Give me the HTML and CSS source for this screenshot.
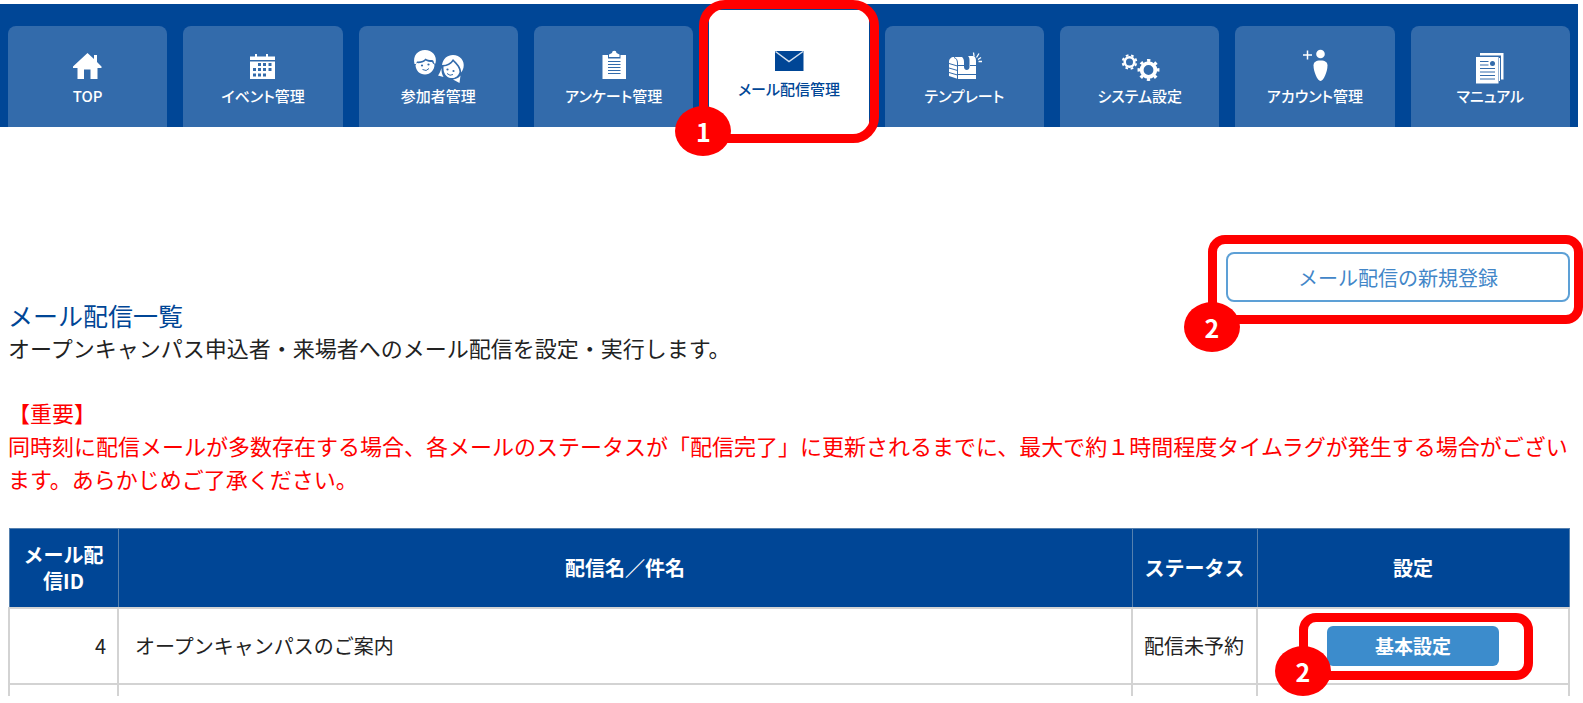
FILE: index.html
```
<!DOCTYPE html>
<html lang="ja">
<head>
<meta charset="utf-8">
<meta name="viewport" content="width=device-width, initial-scale=1">
<title>メール配信一覧</title>
<link rel="stylesheet" href="styles.css">
</head>
<body>
<div class="page">
  <nav class="nav" aria-label="メインメニュー">
    <ul class="nav-list">
      <li class="nav-item"><a class="tab" href="#">
        <svg class="icon" viewBox="0 0 60 36" aria-hidden="true"><path fill="currentColor" d="M29.500 5 36 11V7h3v7l4.500 4.500v1.500H39.500V31H32.500V21.500H26V31H19.500V20H15V18.500Z"/></svg>
        <span>TOP</span></a></li>
      <li class="nav-item"><a class="tab" href="#">
        <svg class="icon" viewBox="0 0 60 36" aria-hidden="true"><path fill="currentColor" fill-rule="evenodd" d="M17 8.500h5V6h2v2.500h9V6h2v2.500h7V12H17ZM17 13.500H42V31H17ZM25 15v3h3v-3ZM30 15v3h3v-3ZM35.500 15v3h3v-3ZM20 20v3h3v-3ZM25 20v3h3v-3ZM30 20v3h3v-3ZM35.500 20v3h3v-3ZM20 25.500v3h3v-3ZM25 25.500v3h3v-3ZM30 25.500v3h3v-3Z"/></svg>
        <span>イベント管理</span></a></li>
      <li class="nav-item"><a class="tab" href="#">
        <svg class="icon" viewBox="0 0 60 36" aria-hidden="true">
          <path fill="currentColor" d="M6.500 16C4.500 7.500 10 2 17 2s12.500 5.500 10.500 13.500l-1.500 0C26 13 25 12 24 12c-3 0-5-.5-6.500-1.500C16 12.500 12.500 14 9 13.500L8 16Z"/>
          <path fill="currentColor" d="M8.500 15c3.500.5 7-.5 9.200-2.600 1.800 1.100 4 1.600 6.300 1.600.8 1 1 2 2.500 2.500C26.500 22 22.500 26.500 17 26.500S8 22.500 7.500 17.500Z"/>
          <g class="ink"><circle cx="14" cy="17.500" r="1.100"/><circle cx="20.500" cy="16.500" r="1.100"/></g>
          <path d="M14.500 21.500q4 2.500 6.500-1" fill="none" class="line"/>
          <path fill="currentColor" d="M34 17C35 10.500 39.500 7 45 7c7 0 12 6 10.500 12.500-.5 2-1.500 4-2.500 5 .5-5-3.500-9-8-13.500-2.500 4-6 6-11 6Z"/>
          <path fill="currentColor" d="M35.500 18.500c4-.3 7.500-2 9.700-5 3.800 3.500 6.300 7 6.300 10.500-1 4-4.500 6.500-8.500 6-5-.5-8-5-7.500-11.500ZM33.500 20c-.2 3.500.5 6.500 2 9L30 27.500c1.500-2 2.500-4.500 3.500-7.500ZM45 31.500c3-.3 5.500-1.500 7.500-4l-1 7.500Z"/>
          <g class="ink"><circle cx="39.500" cy="21.500" r="1.100"/><circle cx="45.500" cy="23" r="1.100"/></g>
          <path d="M39 25.500q3 3 6 1" fill="none" class="line"/>
        </svg>
        <span>参加者管理</span></a></li>
      <li class="nav-item"><a class="tab" href="#">
        <svg class="icon" viewBox="0 0 60 36" aria-hidden="true"><path fill="currentColor" d="M18.500 7H24L24 10.500H36.500L36.500 7H42V31H18.500Z"/><path fill="currentColor" d="M25 9V6.500l3-1.500a2 2 0 0 1 4.500 0l3 1.500V9Z"/><path class="line" fill="none" d="M24 13.500H36.500M24 16.500H36.500M24 19.500H36.500M24 22.500H36.500M24 25.500H36.500"/></svg>
        <span>アンケート管理</span></a></li>
      <li class="nav-item"><a class="tab tab-active" href="#" aria-current="page">
        <svg class="icon" viewBox="0 0 60 36" aria-hidden="true"><path fill="currentColor" d="M16 8H44.500V28H16Z"/><path d="M16.500 8.500 30 18.500 44 8.500" fill="none" stroke="#d5e2f0" stroke-width="1.500"/></svg>
        <span>メール配信管理</span></a>
        <div class="mark mark-tab"><span class="badge">1</span></div></li>
      <li class="nav-item"><a class="tab" href="#">
        <svg class="icon" viewBox="0 0 60 36" aria-hidden="true"><path fill="currentColor" d="M15 14c0-3 2-5 5-5h8c1.500 1 2 3 2 5v5c0 4 5.500 4 5.500 0V12c0-2-.5-3-1.500-4h5c2 0 3 2 3 5V31H24l-9-3Z"/><path class="line" fill="none" d="M23.500 31V15c0-3-1.500-5-3.500-5.500M15 15.500l8.500 2.500M15 20l8.500 2.500M15 24.500l8.500 2.500M23.500 17.500H30M36 17.500h6M24 26.500H42"/><path stroke="currentColor" stroke-width="1.300" fill="none" d="M40 8 39.500 4.500M42.500 9.500l2.500-4M44 11.500l3-2M44.500 13.500h3.500"/></svg>
        <span>テンプレート</span></a></li>
      <li class="nav-item"><a class="tab" href="#">
        <svg class="icon" viewBox="0 0 60 36" aria-hidden="true">
          <g fill="none" stroke="currentColor"><circle cx="19.500" cy="14" r="4.800" stroke-width="2.600"/><circle cx="19.500" cy="14" r="6.800" stroke-width="2" stroke-dasharray="2.700 2.640" transform="rotate(12 19.500 14)"/><circle cx="38.500" cy="22" r="6.800" stroke-width="3.800"/><circle cx="38.500" cy="22" r="9.600" stroke-width="2.800" stroke-dasharray="3.200 4.340" transform="rotate(-10 38.500 22)"/></g>
        </svg>
        <span>システム設定</span></a></li>
      <li class="nav-item"><a class="tab" href="#">
        <svg class="icon" viewBox="0 0 60 36" aria-hidden="true"><path d="M22.500 2.500V11.500M18 7H27" stroke="currentColor" stroke-width="1.500"/><circle cx="35.500" cy="6" r="4.300" fill="currentColor"/><path fill="currentColor" d="M35.500 12.500c5 0 7 2 7 5 0 6-4 15.500-7 15.500s-7-9.500-7-15.500c0-3 2-5 7-5Z"/></svg>
        <span>アカウント管理</span></a></li>
      <li class="nav-item"><a class="tab" href="#">
        <svg class="icon" viewBox="0 0 60 36" aria-hidden="true"><path fill="currentColor" d="M20 5H43.500V31.500H41V7.500H20ZM16 9H38.500V35.500H16Z"/><path class="line" fill="none" d="M20 13.500h8.500M20 17h8.500M20 20.500H35M20 24H35M20 27.500H35M20 31H35"/><path stroke="currentColor" fill="none" d="M39.500 10V33"/><circle cx="32.500" cy="15.500" r="2.500" class="ink"/></svg>
        <span>マニュアル</span></a></li>
    </ul>
  </nav>

  <main class="main">
    <div class="actions">
      <div class="marked marked-new">
        <button class="btn-outline" type="button">メール配信の新規登録</button>
        <div class="mark mark-new"><span class="badge">2</span></div>
      </div>
    </div>
    <h1 class="title">メール配信一覧</h1>
    <p class="text">オープンキャンパス申込者・来場者へのメール配信を設定・実行します。</p>
    <p class="text notice">【重要】<br>同時刻に配信メールが多数存在する場合、各メールのステータスが「配信完了」に更新されるまでに、最大で約１時間程度タイムラグが発生する場合がございます。あらかじめご了承ください。</p>

    <table class="list">
      <colgroup><col class="col-id"><col><col class="col-status"><col class="col-set"></colgroup>
      <thead>
        <tr><th scope="col">メール配信ID</th><th scope="col">配信名／件名</th><th scope="col">ステータス</th><th scope="col">設定</th></tr>
      </thead>
      <tbody>
        <tr>
          <td class="num">4</td>
          <td class="name">オープンキャンパスのご案内</td>
          <td>配信未予約</td>
          <td class="center"><div class="marked marked-set">
            <button class="btn-solid" type="button">基本設定</button>
            <div class="mark mark-set"><span class="badge">2</span></div>
          </div></td>
        </tr>
        <tr class="partial"><td></td><td></td><td></td><td></td></tr>
      </tbody>
    </table>
  </main>
</div>
</body>
</html>
```
FILE: styles.css
```
* { box-sizing: border-box; }
body {
  margin: 0;
  background: #fff;
  color: #222;
  font-family: "Noto Sans CJK JP", sans-serif;
}
.page { padding: 4px 5px 0 0; }

.nav { background: #004696; padding: 0 8px; }
.nav-list {
  display: grid;
  grid-template-columns: repeat(9, minmax(0, 1fr));
  column-gap: 16px;
  align-items: end;
  margin: 0;
  padding: 6px 0 0;
  list-style: none;
}
.nav-item { position: relative; }
.tab {
  display: flex;
  flex-direction: column;
  align-items: center;
  padding: 22px 0 21px;
  border-radius: 8px 8px 0 0;
  background: #336bab;
  color: #fff;
  font-size: 15px;
  font-weight: 500;
  line-height: 20px;
  font-feature-settings: "palt";
  text-decoration: none;
  white-space: nowrap;
}
.tab span { margin-top: 2px; }
.tab-active {
  padding: 33px 0 28px;
  background: #fff;
  color: #004696;
}
.tab-active span { margin-top: 0; }
.icon { display: block; width: 60px; height: 36px; overflow: visible; }
.line { stroke: #336bab; stroke-width: 1; }
.ink { fill: #336bab; }

.mark {
  position: absolute;
  border: 9px solid #f00;
  border-radius: 17px;
  pointer-events: none;
}
.mark-tab { inset: -10px -10px -16px; border-radius: 26px; }
.mark-new { inset: -17px -13px -22px -18px; }
.mark-set { inset: -13px -34px -14px -28px; }
.badge {
  position: absolute;
  left: -33px;
  bottom: -22px;
  display: flex;
  align-items: center;
  justify-content: center;
  width: 56px;
  height: 50px;
  border-radius: 50%;
  background: #f00;
  color: #fff;
  font-size: 25px;
  font-weight: 700;
  line-height: 50px;
}
.mark-new .badge { bottom: -37px; }
.mark-set .badge { bottom: -25px; }

.main { padding: 125px 8px 0; }
.actions { display: flex; justify-content: flex-end; }
.marked { position: relative; }
.marked-new { width: 344px; }
.marked-set { display: inline-block; vertical-align: middle; }
.btn-outline {
  display: block;
  width: 100%;
  height: 50px;
  border: 2px solid #5da0d6;
  border-radius: 8px;
  background: #fff;
  color: #4286c8;
  font: 400 20px "Noto Sans CJK JP", sans-serif;
}
.btn-solid {
  display: block;
  width: 172px;
  height: 40px;
  border: 0;
  border-radius: 6px;
  background: #3c8ccc;
  color: #fff;
  font: 700 19px "Noto Sans CJK JP", sans-serif;
}
.title {
  margin: -2px 0 0;
  color: #004696;
  font-size: 25px;
  font-weight: 400;
  line-height: 31px;
}
.text { margin: 0 0 32px; font-size: 22px; line-height: 33px; }
.notice { color: #f00; margin-bottom: 33px; }

.list {
  width: 100%;
  table-layout: fixed;
  border-collapse: collapse;
  font-size: 20px;
  line-height: 26px;
}
.col-id { width: 109px; }
.col-status { width: 125px; }
.col-set { width: 312px; }
.list th {
  height: 79px;
  padding: 0 11px;
  border: 1px solid #5580ae;
  background: #004696;
  color: #fff;
  font-weight: 700;
}
.list td { height: 76px; padding: 0 11px; border: 2px solid #d3d3d3; }
.list .num { text-align: right; }
.list .name { padding: 0 16px; }
.list .center { text-align: center; }
.list .partial td { height: 12px; border-bottom: 0; }
```
